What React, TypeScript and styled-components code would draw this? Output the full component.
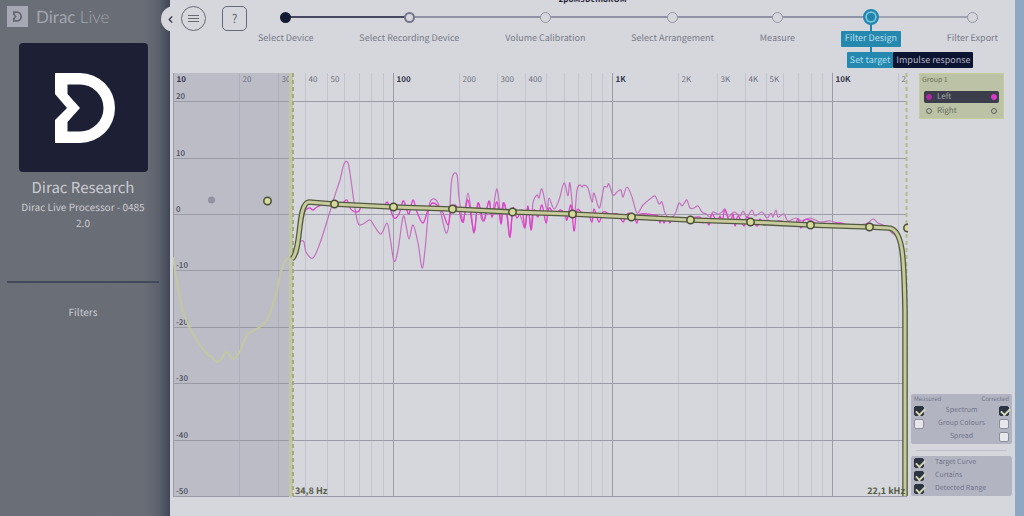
import React from "react";
import styled, { createGlobalStyle } from "styled-components";
import { ChevronLeft } from "lucide-react";

const ui = `"Noto Sans CJK SC", "Open Sans", sans-serif`;

const GlobalStyle = createGlobalStyle`
  * { box-sizing: border-box; }
  body { margin: 0; background: #d6d7dd; font-family: ${ui}; text-rendering: geometricPrecision; }
  button { font: inherit; padding: 0; border: 0; cursor: pointer; text-rendering: inherit; }
`;

const Page = styled.div`
  display: flex;
  min-height: 100vh;
  overflow: hidden;
`;

const Sidebar = styled.aside`
  flex: 0 0 170px;
  padding: 6px 0 0 7px;
  color: #cbccd2;
  background: linear-gradient(90deg, #6a6e76 0, #696d76 144px, #5d626d 158px, #414657 170px);
`;

const Brand = styled.div`
  display: flex;
  align-items: center;
  gap: 8px;
  height: 21px;
  font: 400 17px/21px Lato, sans-serif;
  color: #a3a6ae;
  span { font-weight: 300; }
`;

const Profile = styled.section`
  display: flex;
  flex-direction: column;
  align-items: center;
  width: 152px;
  padding-top: 16px;
  text-align: center;
`;

const ProfileTile = styled.div`
  display: flex;
  align-items: center;
  justify-content: center;
  width: 129px;
  height: 129px;
  padding-left: 3px;
  border-radius: 4px;
  background: #1d2034;
`;

const ProfileName = styled.h1`
  margin: 5px 0 0;
  font-size: 15px;
  font-weight: 400;
  line-height: 22px;
`;

const ProfileInfo = styled.p`
  margin: 0;
  font-size: 10px;
  line-height: 16px;
`;

const SidebarLink = styled.a`
  display: block;
  width: 152px;
  margin-top: 50px;
  padding-top: 19px;
  border-top: 2px solid #44495a;
  color: inherit;
  font-size: 10px;
  line-height: 20px;
  text-align: center;
  text-decoration: none;
`;

const Main = styled.main`
  position: relative;
  flex: 1;
  min-width: 0;
  background: #d6d7dd;
  border-right: 9px solid #8ea8c3;
`;

const CollapseTab = styled.button`
  position: absolute;
  top: 6px;
  left: -9px;
  display: flex;
  align-items: center;
  justify-content: center;
  width: 18px;
  height: 26px;
  border-radius: 13px 0 0 13px;
  background: #d6d7dd;
  color: #2c3041;
`;

const SessionName = styled.div`
  position: absolute;
  top: -6px;
  left: 0;
  right: 0;
  font-size: 8px;
  font-weight: 700;
  line-height: 12px;
  color: #1e2233;
  text-align: center;
`;

const Header = styled.header`
  display: flex;
  align-items: flex-start;
  height: 73px;
  padding: 6px 17px 0 11px;
`;

const RoundButton = styled.button<{ $square?: boolean }>`
  display: flex;
  align-items: center;
  justify-content: center;
  flex: none;
  width: 25px;
  height: 25px;
  margin-right: ${(p) => (p.$square ? 11 : 16)}px;
  border: 1px solid #666a75;
  border-radius: ${(p) => (p.$square ? "5px" : "50%")};
  background: none;
  color: #666a75;
  font-size: 12px;
  line-height: 20px;
`;

const Steps = styled.ol`
  position: relative;
  display: flex;
  justify-content: space-between;
  flex: 1;
  margin: 0;
  padding: 0;
  list-style: none;
  &::before {
    content: "";
    position: absolute;
    top: 10px;
    left: 27px;
    right: 24px;
    height: 2px;
    background: linear-gradient(90deg, #45485f 0 18%, #9192a6 18% 85%, #a1a2b2 85%);
  }
`;

const StepItem = styled.li`
  position: relative;
  display: flex;
  flex-direction: column;
  align-items: center;
`;

type StepState = "done" | "past" | "active" | "todo";

const dotLook: Record<StepState, string> = {
  done: "background: #131a33; border: 0;",
  past: "background: #d6d7dd; border: 2px solid #737588;",
  todo: "background: #d6d7dd; border: 1px solid #9294a5;",
  active: "background: #2384ab; border: 2px solid #2384ab; box-shadow: inset 0 0 0 2px #74c4df;",
};

const StepDot = styled.i<{ $state: StepState }>`
  position: relative;
  z-index: 1;
  width: ${(p) => (p.$state === "active" ? 16 : 11)}px;
  height: ${(p) => (p.$state === "active" ? 16 : 11)}px;
  margin: ${(p) => (p.$state === "active" ? "3px 0" : "6px 0 5px")};
  border-radius: 50%;
  ${(p) => dotLook[p.$state]}
`;

const StepButton = styled.button<{ $active?: boolean }>`
  position: relative;
  z-index: 1;
  height: 16px;
  margin-top: 3px;
  padding: 0 ${(p) => (p.$active ? 4 : 0)}px 2px;
  border-radius: 1px;
  background: ${(p) => (p.$active ? "#2589af" : "none")};
  color: ${(p) => (p.$active ? "#b9dbe8" : "#777a87")};
  font-size: 9px;
  line-height: 14px;
  white-space: nowrap;
`;

const StepStem = styled.span`
  position: absolute;
  top: 18px;
  left: 50%;
  width: 2px;
  height: 30px;
  margin-left: -1px;
  background: #2384ab;
`;

const SubTabs = styled.div`
  position: absolute;
  z-index: 2;
  top: 46px;
  left: 6px;
  display: flex;
`;

const SubTab = styled.button<{ $active?: boolean }>`
  height: 16px;
  padding: 0 3px 1px;
  border-radius: 1px;
  background: ${(p) => (p.$active ? "#2589af" : "#0b1330")};
  color: ${(p) => (p.$active ? "#a8dcee" : "#b4b7c6")};
  font-size: 9px;
  line-height: 15px;
  white-space: nowrap;
`;

const Workspace = styled.div`
  display: flex;
  padding: 0 3px 18px;
`;

const ChartArea = styled.div`
  flex: 1;
  min-width: 0;
`;

const Chart = styled.svg`
  display: block;
  width: 100%;
  height: auto;
  font-family: ${ui};
  font-size: 8px;
`;

const Controls = styled.div`
  display: flex;
  flex-direction: column;
  flex: 0 0 101px;
  margin: 0 0 2px 3px;
`;

const Group = styled.section`
  margin: 0 8px auto;
  padding: 1px 4px;
  border: 1px solid #c6cb9c;
  background: #bcc2a5;
  color: #6b705f;
`;

const GroupTitle = styled.h2`
  margin: 0 0 5px -2px;
  font-size: 7px;
  font-weight: 400;
  line-height: 11px;
`;

const Channel = styled.button<{ $on?: boolean }>`
  display: flex;
  align-items: center;
  width: 100%;
  height: 12px;
  margin-bottom: 2px;
  padding: 0 2px;
  border-radius: 2px;
  background: ${(p) => (p.$on ? "#3b3d4b" : "none")};
  color: ${(p) => (p.$on ? "#a5a8ae" : "#666b60")};
  font-size: 8px;
  line-height: 12px;
  &:last-child { margin-bottom: 0; }
  span { flex: 1; padding-left: 5px; text-align: left; }
`;

const ChannelDot = styled.i<{ $color?: string }>`
  width: 6px;
  height: 6px;
  border-radius: 50%;
  border: 1px solid ${(p) => p.$color ?? "#5a5e5d"};
  background: ${(p) => p.$color ?? "none"};
`;

const Panel = styled.fieldset`
  min-width: 0;
  margin: 0;
  padding: 0 3px 1px;
  border: 0;
  border-radius: 2px;
  background: #b3b4c2;
  color: #72758a;
  font-size: 7px;
`;

const PanelHead = styled.div`
  display: flex;
  justify-content: space-between;
  height: 10px;
  line-height: 10px;
  font-size: 6px;
`;

const OptionRow = styled.div<{ $list?: boolean }>`
  display: grid;
  grid-template-columns: ${(p) => (p.$list ? "21px 1fr" : "10px 1fr 10px")};
  align-items: center;
  height: 13px;
  line-height: 13px;
  text-align: ${(p) => (p.$list ? "left" : "center")};
`;

const Tick = styled.input.attrs({ type: "checkbox" })`
  appearance: none;
  position: relative;
  width: 10px;
  height: 10px;
  margin: 0;
  border: 1px solid #8b8d9c;
  border-radius: 2px;
  background: #e6e7eb;
  &:checked { border-color: #2e3342; background: #2e3342; }
  &:checked::after {
    content: "";
    position: absolute;
    top: 1px;
    left: 1px;
    width: 7px;
    height: 4px;
    border: solid #d3d9b4;
    border-width: 0 0 2px 2px;
    transform: rotate(-45deg);
  }
`;

const Rule = styled.hr`
  width: 91px;
  height: 1px;
  margin: 6px auto 5px;
  border: 0;
  background: #bfc0ca;
`;

type Point = [number, number];

const parse = (s: string): Point[] =>
  s.trim().split(/\s+/).map((p) => p.split(",").map(Number) as Point);

/* Catmull-Rom spline through the given points. */
const smooth = (s: string) => {
  const p = parse(s);
  let d = `M${p[0][0]} ${p[0][1]}`;
  for (let i = 0; i < p.length - 1; i++) {
    const a = p[i - 1] ?? p[i];
    const b = p[i];
    const c = p[i + 1];
    const e = p[i + 2] ?? c;
    d += `C${b[0] + (c[0] - a[0]) / 6} ${b[1] + (c[1] - a[1]) / 6} ${c[0] - (e[0] - b[0]) / 6} ${c[1] - (e[1] - b[1]) / 6} ${c[0]} ${c[1]}`;
  }
  return d;
};

const measured = smooth(`293,259 297,246 301,241 304,242 306,252 313,258 320,243 328,218 335,195 340,180 344,164 348,163 351,180 354,202 358,223 363,224 370,220
375,227 381,234 387,223 390,237 394,261 398,250 403,217 406,225 409,239 413,225 418,243 422,268 425,250 429,207 433,199 438,203 442,218 446,233 449,223 451,187
453,175 457,175 459,197 463,222 465,210 468,193 471,210 474,233 478,203 481,217 484,220 489,201 492,217 495,197 497,189 499,200 501,223 504,203 507,217 510,237
513,210 520,215 525,228 528,207 531,228 533,203 537,195 539,198 542,189 547,210 549,198 554,209 559,200 564,183 568,196 570,183 574,217 577,190 580,185 582,187
584,185 588,188 592,202 594,193 599,208 602,197 604,187 607,187 609,184 613,195 617,192 621,190 623,197 627,187 632,197 637,213 643,205 650,199 655,196 659,204
662,202 665,213 670,218 675,214 679,203 682,206 685,202 687,200 690,208 694,208 698,206 702,212 706,214 710,217 713,212 718,214 722,212 725,209 728,217 734,212
740,216 743,211 747,217 752,210 755,216 762,212 767,218 771,213 773,217 776,210 778,217 784,214 788,221 796,218 802,221 810,218 820,222 830,221 843,224 865,224
873,219 878,223 885,226 892,233 897,237 901,247 903,263`);

const corrected = smooth(`299,236 304,213 307,209 310,208 313,210 317,207 324,204 333,203 342,203 347,200 350,208 355,212 359,211 362,206 372,205 382,208 387,202 390,208 394,218
399,214 403,201 406,207 409,214 413,200 417,212 423,223 428,210 433,203 442,211 448,225 451,210 455,205 459,211 463,222 468,200 474,232 478,203 484,221 489,201 492,217
497,202 501,224 503,203 507,214 510,237 513,208 517,218 522,210 525,227 528,206 531,230 534,210 538,217 542,205 546,223 549,208 555,215 560,210 565,214 567,220
571,205 574,231 577,210 583,214 588,213 592,222 594,209 599,222 603,212 610,214 618,214 623,222 627,214 633,215 637,223 640,214 655,215 658,216 660,223 662,216
664,223 667,217 670,223 672,217 676,218 690,218 700,217 703,223 706,218 709,225 712,214 717,222 720,216 722,223 725,210 730,223 733,214 735,226 738,216 744,226
747,217 757,226 760,219 764,225 768,220 772,225 778,221 788,223 795,225 798,219 801,228 804,220 810,220 820,225 840,223 848,226 860,228 869,224 880,227 890,229
899,236 903,262`);

const target =
  "M292 259C302 250 297 203 309 202L333 204L393 207L452 209L512 212L572 214L631 217L690 220L750 222L810 225L869 227L888 228C903 228 904 256 905 310L905 496";

const detected = smooth(
  "173,257 177,282 182,308 187,322 193,334 198,342 207,354 212,357 217,362 222,358 226,352 229,354 233,359 239,353 247,335 255,330 267,320 275,298 282,268 288,258 292,259"
);

const handles: Point[] = [
  [267, 201], [334, 204], [393, 207], [452, 209], [512, 212], [572, 214],
  [631, 217], [690, 220], [750, 222], [810, 225], [869, 227], [907, 228],
];

const freqX = (hz: number) => Math.floor(173.6 + 219.6 * Math.log10(hz / 10)) + 0.5;
const frequencies = [10, 100, 1000, 10000].flatMap((d) => [1, 2, 3, 4, 5, 6, 7, 8, 9].map((n) => n * d)).filter((f) => f <= 20000);
const freqLabels: Record<number, string> = {
  10: "10", 20: "20", 30: "30", 40: "40", 50: "50", 100: "100", 200: "200", 300: "300", 400: "400",
  1000: "1K", 2000: "2K", 3000: "3K", 4000: "4K", 5000: "5K", 10000: "10K", 20000: "2",
};
const isDecade = (f: number) => [10, 100, 1000, 10000].includes(f);
const levels = [20, 10, 0, -10, -20, -30, -40, -50];
const levelY = (db: number) => Math.floor(214.5 - db * 5.64) + 0.5;

const ResponseChart = () => (
  <Chart viewBox="173 73 735 425" role="img" aria-label="Frequency response">
    <rect x="173" y="73" width="119" height="424" fill="#bcbcc7" />
    {frequencies.map((f) => (
      <line key={f} x1={freqX(f)} x2={freqX(f)} y1="73" y2="496" stroke={isDecade(f) ? "#9b9ca8" : "#777a90"} strokeOpacity={isDecade(f) ? 1 : 0.2} />
    ))}
    {levels.map((l) => (
      <line key={l} x1="173" x2="907" y1={levelY(l)} y2={levelY(l)} stroke="#9a9ba7" />
    ))}
    {frequencies.filter((f) => freqLabels[f]).map((f) => (
      <text key={f} x={freqX(f) + 3} y="82" fill={isDecade(f) ? "#33364a" : "#6f7280"} fontWeight={isDecade(f) ? 700 : 400}>
        {freqLabels[f]}
      </text>
    ))}
    {levels.map((l) => (
      <text key={l} x="176" y={levelY(l) - 3} fill="#4b4e5d" fontWeight="500">{l}</text>
    ))}
    <rect x="289" y="73" width="4" height="424" fill="#c3c8a4" />
    <line x1="293" x2="293" y1="73" y2="496" stroke="#a3a883" strokeWidth="2" strokeDasharray="4 3" />
    <line x1="906.5" x2="906.5" y1="73" y2="496" stroke="#b3bb8a" strokeWidth="2" strokeDasharray="4 3" />
    <path d={detected} fill="none" stroke="#c3c8a0" strokeWidth="2" />
    <path d={measured} fill="none" stroke="#c370bf" strokeWidth="1.2" />
    <path d={corrected} fill="none" stroke="#dd42c8" strokeWidth="1.3" />
    <path d={target} fill="none" stroke="#535940" strokeWidth="5.6" />
    <path d={target} fill="none" stroke="#c7cb9c" strokeWidth="3" />
    <circle cx="211.5" cy="200" r="3.5" fill="#9192a1" />
    {handles.map(([x, y]) => (
      <circle key={x} cx={x + 0.5} cy={y} r="3.7" fill="#d5da9b" stroke="#484d3a" strokeWidth="1.5" />
    ))}
    <g fill="#555c45" fontSize="9" fontWeight="700">
      <text x="295" y="494">34,8 Hz</text>
      <text x="905" y="494" textAnchor="end">22,1 kHz</text>
    </g>
  </Chart>
);

const markPath =
  "M5 0H30A35 35 0 0 1 30 70H5V47L17 35L5 21ZM17.500 11.500V21L30 35L17.500 49V58.500H30A23.500 23.500 0 0 0 30 11.500Z";

const DiracMark = () => (
  <svg width="70" height="70" viewBox="0 0 70 70" aria-hidden="true">
    <path fill="#fff" fillRule="evenodd" d={markPath} />
  </svg>
);

const BrandLogo = () => (
  <svg width="21" height="21" viewBox="-35 -35 140 140" aria-hidden="true">
    <rect x="-35" y="-35" width="140" height="140" fill="#a6a9b3" />
    <path fill="#62666f" fillRule="evenodd" d={markPath} />
  </svg>
);

const steps: { label: string; state: StepState }[] = [
  { label: "Select Device", state: "done" },
  { label: "Select Recording Device", state: "past" },
  { label: "Volume Calibration", state: "todo" },
  { label: "Select Arrangement", state: "todo" },
  { label: "Measure", state: "todo" },
  { label: "Filter Design", state: "active" },
  { label: "Filter Export", state: "todo" },
];

export default function App() {
  return (
    <Page>
      <GlobalStyle />
      <Sidebar>
        <Brand>
          <BrandLogo />
          <div>Dirac <span>Live</span></div>
        </Brand>
        <Profile>
          <ProfileTile><DiracMark /></ProfileTile>
          <ProfileName>Dirac Research</ProfileName>
          <ProfileInfo>Dirac Live Processor - 0485<br />2.0</ProfileInfo>
        </Profile>
        <SidebarLink href="#filters">Filters</SidebarLink>
      </Sidebar>
      <Main>
        <CollapseTab aria-label="Collapse sidebar"><ChevronLeft size={11} strokeWidth={2.5} /></CollapseTab>
        <SessionName>2poM9DemoROM</SessionName>
        <Header>
          <RoundButton aria-label="Menu">
            <svg width="11" height="9" viewBox="0 0 11 9" stroke="currentColor"><path d="M0 1.500H11M0 4.500H11M0 7.500H11" /></svg>
          </RoundButton>
          <RoundButton $square aria-label="Help">?</RoundButton>
          <Steps>
            {steps.map(({ label, state }) => (
              <StepItem key={label}>
                {state === "active" && <StepStem />}
                <StepDot $state={state} />
                <StepButton $active={state === "active"}>{label}</StepButton>
                {state === "active" && (
                  <SubTabs>
                    <SubTab $active>Set target</SubTab>
                    <SubTab>Impulse response</SubTab>
                  </SubTabs>
                )}
              </StepItem>
            ))}
          </Steps>
        </Header>
        <Workspace>
          <ChartArea><ResponseChart /></ChartArea>
          <Controls>
            <Group>
              <GroupTitle>Group 1</GroupTitle>
              <Channel $on><ChannelDot $color="#b02aa5" /><span>Left</span><ChannelDot $color="#dc38cc" /></Channel>
              <Channel><ChannelDot /><span>Right</span><ChannelDot /></Channel>
            </Group>
            <Panel aria-label="Curves">
              <PanelHead><span>Measured</span><span>Corrected</span></PanelHead>
              <OptionRow>
                <Tick id="spectrum" defaultChecked />
                <label htmlFor="spectrum">Spectrum</label>
                <Tick aria-label="Spectrum, corrected" defaultChecked />
              </OptionRow>
              <OptionRow>
                <Tick id="colours" />
                <label htmlFor="colours">Group Colours</label>
                <Tick aria-label="Group Colours, corrected" />
              </OptionRow>
              <OptionRow>
                <span />
                <label htmlFor="spread">Spread</label>
                <Tick id="spread" />
              </OptionRow>
            </Panel>
            <Rule />
            <Panel aria-label="Overlays">
              {["Target Curve", "Curtains", "Detected Range"].map((name) => (
                <OptionRow $list key={name}>
                  <Tick id={name} defaultChecked />
                  <label htmlFor={name}>{name}</label>
                </OptionRow>
              ))}
            </Panel>
          </Controls>
        </Workspace>
      </Main>
    </Page>
  );
}
